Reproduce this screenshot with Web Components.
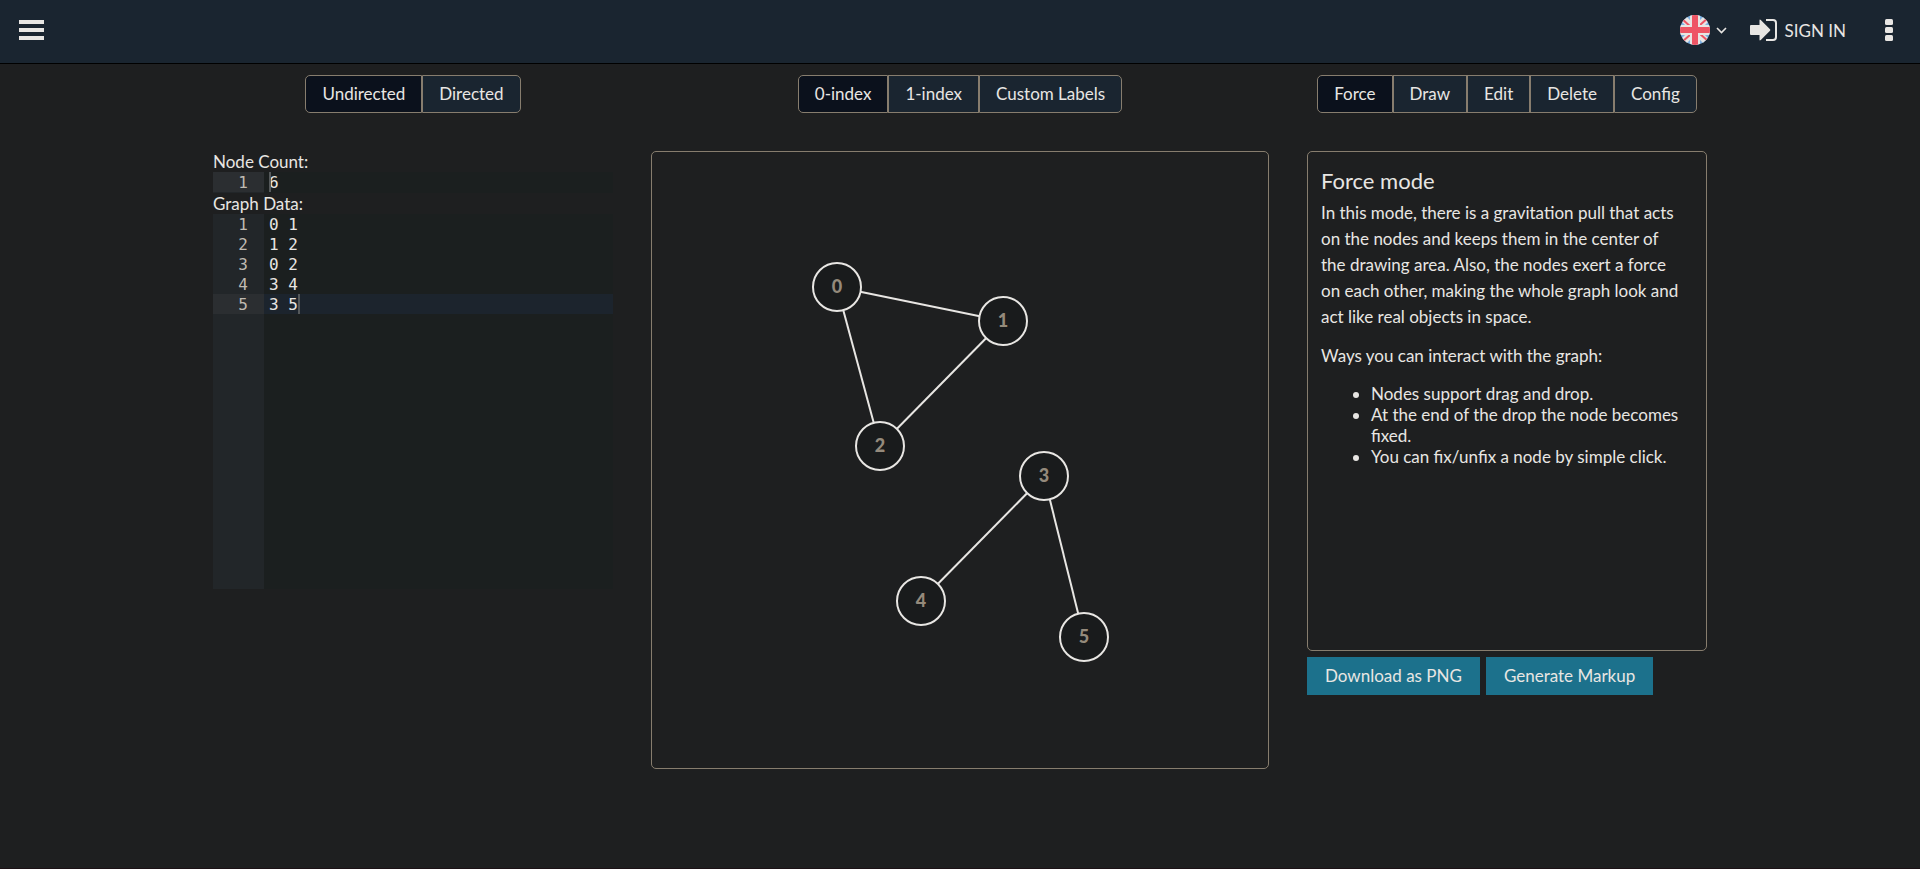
<!DOCTYPE html>
<html lang="en">
<head>
<meta charset="utf-8">
<meta name="viewport" content="width=device-width, initial-scale=1">
<title>Graph Editor</title>
<style>
  :root {
    --page: #1e1f20;
    --bar: #1a2530;
    --active: #0b111c;
    --line: #877d6e;
    --ink: #e8e6e3;
    --accent: #1c718c;
  }
  body {
    margin: 0;
    background: var(--page);
    color: var(--ink);
    font: 17px/21px Lato, sans-serif;
  }
</style>
</head>
<body>
<graph-app></graph-app>

<template id="graph-app">
  <style>
    :host { display: flex; flex-direction: column; box-sizing: border-box; min-height: 100vh; border-bottom: 1px solid #1c1216; }
    main {
      display: grid;
      grid-template-columns: 400fr 618fr 400fr;
      column-gap: 38px;
      row-gap: 38px;
      width: 100%;
      max-width: 1494px;
      margin: 0 auto;
      padding-top: 11px;
      align-items: start;
    }
    toggle-group { justify-self: center; }
    .actions { display: flex; flex-wrap: wrap; gap: 6px; margin-top: 6px; }
    @media (max-width: 1200px) {
      main { grid-template-columns: minmax(0, 618px); justify-content: center; padding: 11px 16px; box-sizing: border-box; }
    }
  </style>
  <site-header></site-header>
  <main>
    <toggle-group label="Direction" options="Undirected|Directed"></toggle-group>
    <toggle-group label="Labels" options="0-index|1-index|Custom Labels"></toggle-group>
    <toggle-group label="Mode" options="Force|Draw|Edit|Delete|Config"></toggle-group>
    <section>
      <code-editor rows="1" caret="1,0">
        Node Count:
      </code-editor>
      <code-editor class="data" rows="5" caret="5,3">
        Graph Data:
      </code-editor>
    </section>
    <graph-canvas></graph-canvas>
    <section>
      <info-panel>
        <span slot="title">Force mode</span>
        <span slot="intro">In this mode, there is a gravitation pull that acts on the nodes and keeps them in the center of the drawing area. Also, the nodes exert a force on each other, making the whole graph look and act like real objects in space.</span>
        <span slot="lead">Ways you can interact with the graph:</span>
        <span slot="tip1">Nodes support drag and drop.</span>
        <span slot="tip2">At the end of the drop the node becomes fixed.</span>
        <span slot="tip3">You can fix/unfix a node by simple click.</span>
      </info-panel>
      <div class="actions">
        <action-button>Download as PNG</action-button>
        <action-button>Generate Markup</action-button>
      </div>
    </section>
  </main>
</template>

<template id="site-header">
  <style>
    :host { display: block; background: var(--bar); border-bottom: 1px solid #000; }
    nav { display: flex; align-items: center; height: 63px; padding: 0 27px 3px 19px; box-sizing: border-box; }
    button { display: flex; align-items: center; padding: 0; border: 0; background: none; color: inherit; font: inherit; cursor: pointer; }
    .menu { margin-right: auto; }
    .lang { gap: 6px; margin-right: 23px; }
    a { display: flex; align-items: center; gap: 8px; color: inherit; text-decoration: none; margin-right: 39px; }
    svg { display: block; }
  </style>
  <nav aria-label="Main">
    <button class="menu" aria-label="Menu">
      <svg width="25" height="20" fill="currentColor"><path d="M0 0h25v4H0zM0 8h25v4H0zM0 16h25v4H0z"/></svg>
    </button>
    <button class="lang" aria-label="Language">
      <svg width="30" height="30" viewBox="0 0 30 30">
        <defs><clipPath id="round"><circle cx="15" cy="15" r="15"/></clipPath></defs>
        <g clip-path="url(#round)">
          <path fill="#7db1e2" d="M0 0h30v30H0z"/>
          <path stroke="#e8e6e3" stroke-width="7" d="M0 0l30 30M30 0L0 30"/>
          <path stroke="#ee5564" stroke-width="2" d="M1 3l11 10M20 10l9-8M2 27l9-8M19 18l10 9"/>
          <path fill="#e8e6e3" d="M10 0h10v30H10zM0 10h30v10H0z"/>
          <path fill="#ee5564" d="M12 0h6v30h-6zM0 12h30v6H0z"/>
        </g>
      </svg>
      <svg width="11" height="8" fill="none" stroke="currentColor" stroke-width="1.600"><path d="M1 2l4.500 4.500L10 2"/></svg>
    </button>
    <a href="#sign-in">
      <svg width="27" height="22" viewBox="0 0 27 22" fill="currentColor">
        <path d="M1 6h8.500V1.500Q9.500 0 10.800 1l9.200 9.200q.7.800 0 1.600L10.800 21q-1.300 1-1.300-.500V16H1q-1 0-1-1V7q0-1 1-1z"/>
        <path fill="none" stroke="currentColor" stroke-width="2" d="M16 1h7q3 0 3 3v14q0 3-3 3h-7"/>
      </svg>
      <span>SIGN IN</span>
    </a>
    <button aria-label="More">
      <svg width="8" height="22" fill="currentColor"><rect y="0" width="8" height="6" rx="1.500"/><rect y="8" width="8" height="6" rx="1.500"/><rect y="16" width="8" height="6" rx="1.500"/></svg>
    </button>
  </nav>
</template>

<template id="toggle-group">
  <style>
    :host { display: inline-flex; }
    button {
      height: 38px; padding: 0 16px 2px; border: 1px solid var(--line);
      background: var(--bar); color: inherit; font: inherit; cursor: pointer;
      white-space: nowrap;
    }
    button[aria-pressed="true"] { background: var(--active); }
    button:first-of-type { border-radius: 5px 0 0 5px; }
    button:last-of-type { border-radius: 0 5px 5px 0; }
  </style>
</template>

<template id="code-editor">
  <style>
    :host { display: block; }
    label { display: block; line-height: 21px; }
    .editor {
      position: relative; display: grid; grid-template-columns: 51px 1fr;
      height: 21px; background: #1b1f1f;
      font: 16px/20px "DejaVu Sans Mono", monospace;
    }
    :host(.data) .editor { height: 375px; }
    .gutter { background: #222629; color: #bfbab2; text-align: right; }
    .gutter div { height: 20px; padding-right: 16px; line-height: 22px; }
    .gutter .current { background: #2b2e31; }
    textarea {
      display: block; width: 100%; height: 100%; box-sizing: border-box; margin: 0;
      padding: 1px 0 0 5px; border: 0; outline: 0; resize: none; overflow: hidden;
      background: none; color: inherit; font: inherit;
    }
    :host(.data) textarea { background: linear-gradient(#1c242d, #1c242d) 0 80px / 100% 20px no-repeat; }
    .caret { position: absolute; width: 2px; height: 20px; background: #55595b; }
  </style>
  <label for="text"><slot></slot></label>
  <div class="editor">
    <div class="gutter" aria-hidden="true"></div>
    <textarea id="text" spellcheck="false"></textarea>
    <i class="caret"></i>
  </div>
</template>

<template id="graph-canvas">
  <style>
    :host { display: block; border: 1px solid var(--line); border-radius: 5px; }
    svg { display: block; width: 100%; }
    line, circle { stroke: var(--ink); stroke-width: 2px; }
    circle { fill: #191b1c; }
    text { fill: #948a7b; font: 900 18px Lato, sans-serif; text-anchor: middle; }
  </style>
  <svg viewBox="0 0 616 616" role="img" aria-label="Graph"></svg>
</template>

<template id="info-panel">
  <style>
    :host { display: block; box-sizing: border-box; min-height: 500px; padding: 16px 24px 16px 13px; border: 1px solid var(--line); border-radius: 5px; }
    h2 { margin: 0; font-size: 22px; line-height: 26px; font-weight: 400; }
    p { margin: 0 0 13px; line-height: 26px; }
    h2 + p { margin-top: 6px; }
    ul { margin: 0; padding: 1px 0 0 50px; }
  </style>
  <h2><slot name="title"></slot></h2>
  <p><slot name="intro"></slot></p>
  <p><slot name="lead"></slot></p>
  <ul>
    <li><slot name="tip1"></slot></li>
    <li><slot name="tip2"></slot></li>
    <li><slot name="tip3"></slot></li>
  </ul>
</template>

<template id="action-button">
  <style>
    :host { display: block; }
    button { display: block; height: 38px; padding: 0 18px 2px; border: 0; background: var(--accent); color: inherit; font: inherit; cursor: pointer; }
  </style>
  <button><slot></slot></button>
</template>

<script>
  class Base extends HTMLElement {
    constructor() {
      super();
      this.attachShadow({ mode: "open" })
        .append(document.getElementById(this.localName).content.cloneNode(true));
    }
  }

  class ToggleGroup extends Base {
    connectedCallback() {
      this.setAttribute("role", "group");
      this.setAttribute("aria-label", this.getAttribute("label"));
      this.getAttribute("options").split("|").forEach((text, i) => {
        const button = document.createElement("button");
        button.textContent = text;
        button.setAttribute("aria-pressed", i === 0);
        button.onclick = () => this.shadowRoot.querySelectorAll("button")
          .forEach(b => b.setAttribute("aria-pressed", b === button));
        this.shadowRoot.append(button);
      });
    }
  }

  const texts = { 1: "6", 5: "0 1\n1 2\n0 2\n3 4\n3 5" };

  class CodeEditor extends Base {
    connectedCallback() {
      const root = this.shadowRoot;
      const rows = Number(this.getAttribute("rows"));
      const [line, column] = this.getAttribute("caret").split(",").map(Number);
      root.querySelector("textarea").value = texts[rows];
      for (let n = 1; n <= rows; n++) {
        const cell = document.createElement("div");
        cell.textContent = n;
        if (n === line) cell.className = "current";
        root.querySelector(".gutter").append(cell);
      }
      const caret = root.querySelector(".caret");
      caret.style.top = (line - 1) * 20 + "px";
      caret.style.left = `calc(56px + ${column}ch)`;
    }
  }

  const nodes = [[185, 135], [351, 169], [228, 294], [392, 324], [269, 449], [432, 485]];
  const edges = [[0, 1], [1, 2], [0, 2], [3, 4], [3, 5]];

  class GraphCanvas extends Base {
    connectedCallback() {
      const svg = this.shadowRoot.querySelector("svg");
      const add = (name, attributes, text = "") => {
        const shape = document.createElementNS("http://www.w3.org/2000/svg", name);
        for (const key in attributes) shape.setAttribute(key, attributes[key]);
        shape.textContent = text;
        svg.append(shape);
      };
      for (const [a, b] of edges)
        add("line", { x1: nodes[a][0], y1: nodes[a][1], x2: nodes[b][0], y2: nodes[b][1] });
      nodes.forEach(([x, y], i) => {
        add("circle", { cx: x, cy: y, r: 24 });
        add("text", { x, y: y + 6 }, i);
      });
    }
  }

  customElements.define("site-header", class extends Base {});
  customElements.define("toggle-group", ToggleGroup);
  customElements.define("code-editor", CodeEditor);
  customElements.define("graph-canvas", GraphCanvas);
  customElements.define("info-panel", class extends Base {});
  customElements.define("action-button", class extends Base {});
  customElements.define("graph-app", class extends Base {});
</script>
</body>
</html>
